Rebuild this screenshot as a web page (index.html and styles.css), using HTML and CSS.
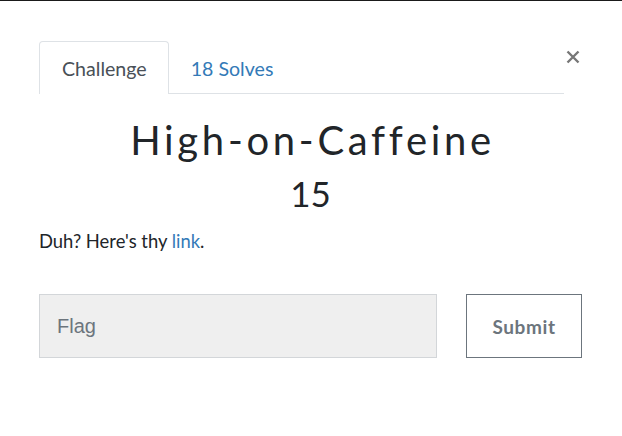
FILE: index.html
```html
<!DOCTYPE html>
<html>
<head>
<meta charset="utf-8">
<link rel="stylesheet" href="styles.css">
</head>
<body>
<div class="modal">
  <button class="close" aria-label="Close">
    <svg width="14" height="14" viewBox="0 0 14 14"><path d="M1.5 1.5 L12.5 12.5 M12.5 1.5 L1.5 12.5" stroke="#777" stroke-width="2.4" stroke-linecap="butt"/></svg>
  </button>
  <ul class="tabs">
    <li class="tab active">Challenge</li>
    <li class="tab">18 Solves</li>
  </ul>
  <h2 class="title">High-on-Caffeine</h2>
  <h3 class="value">15</h3>
  <p class="desc">Duh? Here's thy <a href="#">link</a>.</p>
  <form class="submit-row">
    <input class="flag" type="text" placeholder="Flag">
    <button class="submit" type="button">Submit</button>
  </form>
</div>
</body>
</html>
```

FILE: styles.css
```css
html, body {
  margin: 0;
  padding: 0;
  background: #fff;
}
body {
  border-top: 1px solid #1a1a1a;
  font-family: Lato, "Liberation Sans", sans-serif;
  color: #212529;
}
.modal {
  position: relative;
  padding: 40px 40px 0 39px;
}
.close {
  position: absolute;
  top: 49px;
  right: 42px;
  background: none;
  border: 0;
  padding: 0;
  width: 14px;
  height: 14px;
  line-height: 0;
}
.tabs {
  list-style: none;
  margin: 0 18px 0 0;
  padding: 0;
  display: flex;
  border-bottom: 1px solid #dee2e6;
}
.tab {
  padding: 0 21px;
  height: 51px;
  line-height: 54px;
  font-size: 19.6px;
  color: #337ab7;
  border: 1px solid transparent;
  border-bottom: 0;
  border-radius: 4px 4px 0 0;
  margin-bottom: -1px;
}
.tab.active {
  padding: 0 21px 0 22px;
  color: #495057;
  border-color: #dee2e6;
  background: #fff;
  height: 52px;
}
.title {
  margin: 22px 0 0;
  padding-left: 4px;
  text-align: center;
  font-weight: 400;
  font-size: 40px;
  letter-spacing: 3.7px;
  line-height: 48px;
}
.value {
  margin: 8px 0 0;
  text-align: center;
  font-weight: 400;
  font-size: 35px;
  line-height: 42px;
}
.desc {
  margin: 14px 0 0;
  font-size: 18.4px;
  line-height: 26px;
}
.desc a {
  color: #337ab7;
  text-decoration: none;
}
.submit-row {
  display: flex;
  justify-content: space-between;
  margin-top: 40px;
}
.flag {
  box-sizing: border-box;
  width: 398px;
  height: 64px;
  margin: 0;
  padding: 0 17px;
  background: #efefef;
  border: 1px solid #d3d6d9;
  font-family: "Liberation Sans", Arial, sans-serif;
  font-size: 20px;
  color: #495057;
  outline: none;
}
.flag::placeholder {
  color: #6c757d;
}
.submit {
  box-sizing: border-box;
  width: 116px;
  height: 64px;
  margin: 0;
  background: #fff;
  border: 1px solid #6c757d;
  font-family: Lato, sans-serif;
  font-weight: 700;
  font-size: 19px;
  color: #6c757d;
  letter-spacing: 0.6px;
}
```
